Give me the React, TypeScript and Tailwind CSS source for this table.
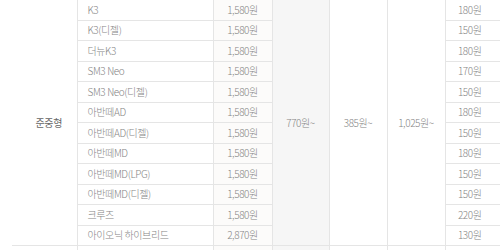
const rows: [string, string, string][] = [
  ['K3', '1,580원', '180원'],
  ['K3(디젤)', '1,580원', '150원'],
  ['더뉴K3', '1,580원', '180원'],
  ['SM3 Neo', '1,580원', '170원'],
  ['SM3 Neo(디젤)', '1,580원', '150원'],
  ['아반떼AD', '1,580원', '180원'],
  ['아반떼AD(디젤)', '1,580원', '150원'],
  ['아반떼MD', '1,580원', '180원'],
  ['아반떼MD(LPG)', '1,580원', '150원'],
  ['아반떼MD(디젤)', '1,580원', '150원'],
  ['크루즈', '1,580원', '220원'],
  ['아이오닉 하이브리드', '2,870원', '130원'],
];

export default function App() {
  return (
    <div className="w-[500px] h-[250px] overflow-hidden bg-white font-['Noto_Sans_CJK_KR',sans-serif] font-light text-[10px] tracking-[-0.4px] text-[#858585]">
      <table className="ml-[12px] mt-[-1px] border-collapse table-fixed w-[488px]">
        <colgroup>
          <col className="w-[65px]" />
          <col className="w-[136px]" />
          <col className="w-[59px]" />
          <col className="w-[57px]" />
          <col className="w-[58px]" />
          <col className="w-[58px]" />
          <col className="w-[55px]" />
        </colgroup>
        <tbody>
          {rows.map(([name, price, extra], i) => (
            <tr key={name} className="h-[20.5px]">
              {i === 0 && (
                <td rowSpan={12} className="border-y border-r border-[#e5e5e5] text-center pl-[9px] align-middle text-[#666] font-normal">
                  준중형
                </td>
              )}
              <td className="border border-[#e5e5e5] pl-[10px] leading-none">{name}</td>
              <td className="border border-[#e5e5e5] bg-[#fcfbfa] text-center leading-none">{price}</td>
              {i === 0 && (
                <>
                  <td rowSpan={12} className="border border-[#e5e5e5] bg-[#f6f6f6] text-center align-middle">770원~</td>
                  <td rowSpan={12} className="border border-[#e5e5e5] text-center align-middle">385원~</td>
                  <td rowSpan={12} className="border border-[#e5e5e5] text-center align-middle">1,025원~</td>
                </>
              )}
              <td className="border-y border-l border-[#e5e5e5] text-center pr-[6px] leading-none">{extra}</td>
            </tr>
          ))}
          <tr className="h-[20.5px]">
            <td className="border-y border-r border-[#e5e5e5]" />
            <td className="border border-[#e5e5e5]" />
            <td className="border border-[#e5e5e5] bg-[#fcfbfa]" />
            <td className="border border-[#e5e5e5] bg-[#f6f6f6]" />
            <td className="border border-[#e5e5e5]" />
            <td className="border border-[#e5e5e5]" />
            <td className="border-y border-l border-[#e5e5e5]" />
          </tr>
        </tbody>
      </table>
    </div>
  );
}
